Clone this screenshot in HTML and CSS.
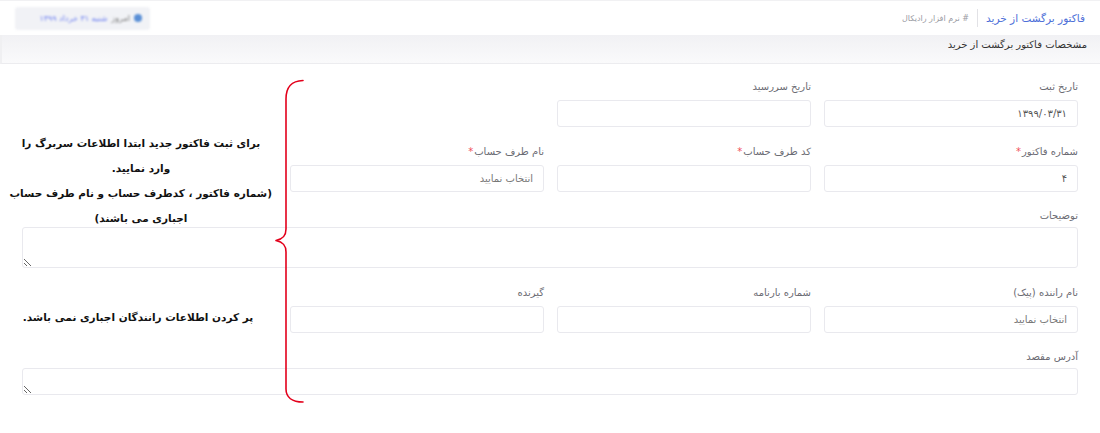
FILE: index.html
```html
<!DOCTYPE html>
<html lang="fa" dir="rtl">
<head>
<meta charset="utf-8">
<title>فاکتور برگشت از خرید</title>
<link rel="stylesheet" href="styles.css">
</head>
<body>
<div class="page">
  <header class="topbar">
    <div class="crumbs">
      <span class="title">فاکتور برگشت از خرید</span>
      <span class="sep"></span>
      <span class="sub"># نرم افزار رادیکال</span>
    </div>
    <div class="badge">
      <span class="dot"></span>
      <span class="today">امروز</span>
      <span class="date">شنبه ۳۱ خرداد ۱۳۹۹</span>
    </div>
  </header>
  <div class="subhead">مشخصات فاکتور برگشت از خرید</div>

  <form class="form">
    <div class="row">
      <div class="field"><label>تاریخ ثبت</label><input class="inp" value="۱۳۹۹/۰۳/۳۱"></div>
      <div class="field"><label>تاریخ سررسید</label><input class="inp" value=""></div>
    </div>
    <div class="row">
      <div class="field"><label>شماره فاکتور<span class="req">*</span></label><input class="inp" value="۴"></div>
      <div class="field"><label>کد طرف حساب<span class="req">*</span></label><input class="inp" value=""></div>
      <div class="field"><label>نام طرف حساب<span class="req">*</span></label><input class="inp ph" value="انتخاب نمایید"></div>
    </div>
    <div class="row full">
      <div class="field"><label>توضیحات</label><textarea class="ta tall"></textarea></div>
    </div>
    <div class="row">
      <div class="field"><label>نام راننده (پیک)</label><input class="inp ph" value="انتخاب نمایید"></div>
      <div class="field"><label>شماره بارنامه</label><input class="inp" value=""></div>
      <div class="field"><label>گیرنده</label><input class="inp" value=""></div>
    </div>
    <div class="row full">
      <div class="field"><label>آدرس مقصد</label><textarea class="ta short"></textarea></div>
    </div>
  </form>

  <div class="note note1">برای ثبت فاکتور جدید ابتدا اطلاعات سربرگ را<br>وارد نمایید.<br>(شماره فاکتور ، کدطرف حساب و نام طرف حساب<br>اجباری می باشند)</div>
  <div class="note note2">پر کردن اطلاعات رانندگان اجباری نمی باشد.</div>

  <svg class="brace" width="40" height="330" viewBox="270 78 40 330" aria-hidden="true">
    <path d="M303,80.5 C291,81 286,87 286,99 L286,229 C286,236 283,239 276,240.5 C283,242 286,245 286,252 L286,389 C286,397 292,402 303,402"
      fill="none" stroke="#e3001b" stroke-width="1.6" stroke-linecap="round" stroke-linejoin="round"/>
  </svg>
</div>
</body>
</html>
```
FILE: styles.css
```css
html, body {
  margin: 0;
  padding: 0;
  background: #ffffff;
}
body {
  font-family: "DejaVu Sans", "Noto Sans", sans-serif;
  direction: rtl;
  color: #333;
}
.page {
  position: relative;
  width: 1100px;
  height: 433px;
  overflow: hidden;
}
.topbar {
  height: 35px;
  display: flex;
  align-items: center;
  justify-content: space-between;
  padding: 0 15px;
  box-sizing: border-box;
  border-top: 1px solid #f1f1f3;
}
.crumbs {
  display: flex;
  align-items: center;
  gap: 8px;
}
.title {
  color: #4d6fd8;
  font-size: 10.5px;
}
.sep {
  width: 1px;
  height: 18px;
  background: #e2e2e6;
}
.sub {
  color: #9a9aa2;
  font-size: 8px;
}
.badge {
  display: flex;
  align-items: center;
  gap: 4px;
  height: 23px;
  width: 135px;
  padding: 0 8px;
  box-sizing: border-box;
  background: #f1f2f6;
  border-radius: 3px;
  filter: blur(1.2px);
  font-size: 8px;
}
.dot {
  width: 8px;
  height: 8px;
  border-radius: 50%;
  background: #5a8fd6;
}
.today { color: #777; }
.date { color: #6b7ef0; }

.subhead {
  height: 29px;
  box-sizing: border-box;
  padding: 4px 13px 0 0;
  font-size: 10px;
  color: #333;
  background: linear-gradient(#f1f1f4, #fafafb);
  border-bottom: 1px solid #ececef;
  border-left: 2px solid #f0f0f2;
}

.form {
  padding: 16px 22px 0 22px;
  display: flex;
  flex-direction: column;
  gap: 18px;
}
.row {
  display: grid;
  grid-template-columns: repeat(3, 254px);
  column-gap: 13px;
}
.row.full {
  grid-template-columns: 1fr;
}
.field {
  display: flex;
  flex-direction: column;
}
label {
  font-size: 10px;
  line-height: 14px;
  color: #6b6b73;
  margin-bottom: 6px;
}
.row.full label {
  margin-bottom: 4px;
}
.row.full {
  margin-top: -1px;
}
.req {
  color: #f0505a;
  margin-right: 1px;
}
.inp, .ta {
  box-sizing: border-box;
  border: 1px solid #e9e9ee;
  border-radius: 3px;
  background: #fff;
  font-family: "DejaVu Sans", sans-serif;
  font-size: 10px;
  color: #555;
  padding: 0 10px;
  outline: none;
  direction: rtl;
  margin: 0;
}
.inp {
  height: 27px;
}
.inp.ph {
  color: #777;
}
.ta {
  width: 100%;
  resize: vertical;
  display: block;
}
.ta.tall { height: 41px; }
.ta.short { height: 27px; }

.note {
  position: absolute;
  font-weight: bold;
  font-size: 10.5px;
  color: #111;
  text-align: center;
  white-space: nowrap;
  line-height: 25px;
}
.note1 {
  left: 10px;
  top: 131px;
  width: 262px;
}
.note2 {
  left: 20px;
  top: 305px;
  width: 236px;
}
.brace {
  position: absolute;
  left: 270px;
  top: 78px;
}
```
